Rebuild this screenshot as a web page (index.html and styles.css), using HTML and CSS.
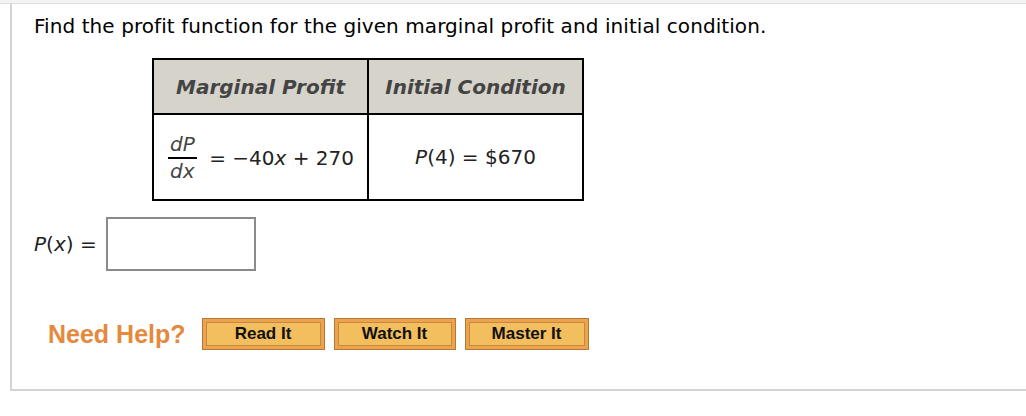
FILE: index.html
```html
<!DOCTYPE html>
<html>
<head>
<meta charset="utf-8">
<link rel="stylesheet" href="styles.css">
</head>
<body>
<div class="topbar"></div>
<div class="panel">
  <p class="question">Find the profit function for the given marginal profit and initial condition.</p>
  <table class="data">
    <thead>
      <tr><th>Marginal Profit</th><th>Initial Condition</th></tr>
    </thead>
    <tbody>
      <tr>
        <td class="left">
          <span class="frac"><span class="num"><i>dP</i></span><span class="den"><i>dx</i></span></span>
          <span class="eq">= &minus;40<i>x</i> + 270</span>
        </td>
        <td class="center"><i>P</i>(4) = $670</td>
      </tr>
    </tbody>
  </table>
  <div class="answer">
    <span class="label"><i>P</i>(<i>x</i>) =</span>
    <span class="box"></span>
  </div>
  <div class="help">
    <span class="need">Need Help?</span>
    <span class="btn b1">Read It</span>
    <span class="btn b2">Watch It</span>
    <span class="btn b3">Master It</span>
  </div>
</div>
</body>
</html>
```
FILE: styles.css
```css
html, body { margin: 0; padding: 0; background: #fff; }
body { font-family: "DejaVu Sans", Verdana, sans-serif; color: #000; }
.topbar { height: 3px; background: #f3f3f3; border-bottom: 1px solid #dcdcdc; }
.panel {
  margin-left: 10px;
  border-left: 2px solid #d4d4d4;
  border-bottom: 2px solid #d4d4d4;
  height: 387px;
  box-sizing: border-box;
  padding-left: 22px;
  padding-top: 11px;
}
.question { margin: 0; font-size: 20px; line-height: 22px; letter-spacing: 0.07px; }
.data {
  margin-top: 21px;
  margin-left: 118px;
  border-collapse: collapse;
  border: 2px solid #000;
  table-layout: fixed;
  width: 432px;
}
.data th, .data td { border: 2px solid #000; padding: 0; }
.data th {
  background: #d6d3cb;
  height: 53px;
  font-size: 20px;
  font-style: italic;
  font-weight: bold;
  color: #444;
  text-align: center;
}
.data td { height: 84px; font-size: 20px; color: #222; }
.data td.center { text-align: center; }
.data td.left { padding-left: 14px; white-space: nowrap; }
.frac { display: inline-flex; flex-direction: column; align-items: center; vertical-align: middle; margin-right: 6px; }
.frac .num { border-bottom: 2px solid #000; padding: 0 2px 2px; line-height: 22px; color: #444; }
.frac .den { padding-top: 1px; line-height: 22px; color: #444; }
.eq { vertical-align: middle; }
.answer { display: flex; align-items: center; margin-top: 16px; }
.label { font-size: 20px; color: #222; width: 72px; }
.box { width: 146px; height: 50px; border: 2px solid #8a8a8a; }
.help { display: flex; align-items: center; margin-top: 47px; margin-left: 14px; }
.need {
  font-family: "Liberation Sans", Arial, sans-serif;
  font-weight: bold;
  font-size: 25px;
  color: #e5893c;
  margin-right: 16px;
}
.btn {
  height: 32px;
  border: 1px solid #b27a3a;
  background: #f3be5e;
  box-sizing: border-box;
  display: flex;
  align-items: center;
  justify-content: center;
  margin-right: 9px;
  font-family: "Liberation Sans", Arial, sans-serif;
  font-weight: bold;
  font-size: 17px;
  color: #111;
  box-shadow: inset 0 0 0 3px #f0a24a, inset 0 0 0 4px #c08a48;
}
.b1 { width: 123px; }
.b2 { width: 122px; }
.b3 { width: 124px; }
```
